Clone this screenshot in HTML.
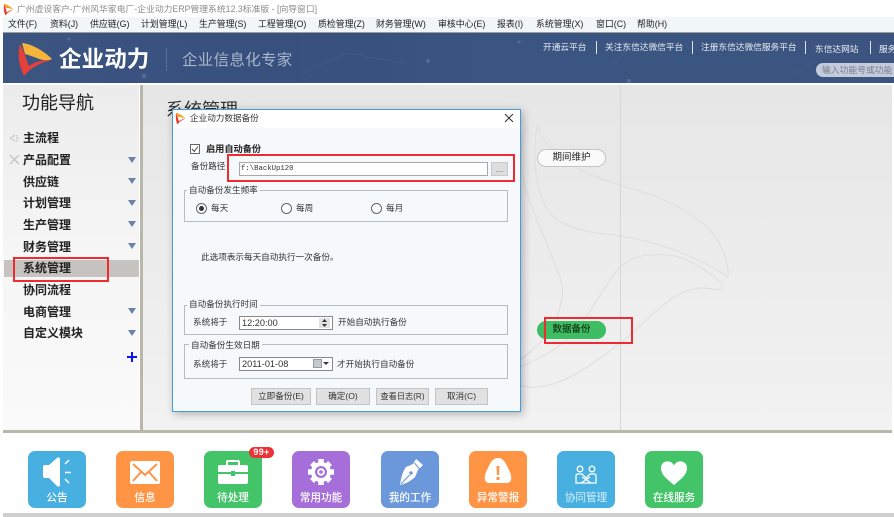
<!DOCTYPE html>
<html lang="zh"><head><meta charset="utf-8"><title>企业动力</title>
<style>
html,body{margin:0;padding:0;background:#fff}
#p{position:relative;width:894px;height:517px;overflow:hidden;background:#fff;font-family:"Liberation Sans","Noto Sans CJK SC",sans-serif;color:#222;filter:blur(.3px)}
#p div{position:absolute;white-space:nowrap}
.m{top:17px;font-size:8.9px;line-height:15px;color:#222}
.l{font-size:8.7px;line-height:14px;color:#e8ecf4;top:40px}
.s{top:41px;width:1px;height:13px;background:#dde3ee}
.n{left:23px;font-size:12px;font-weight:bold;line-height:16px;color:#222}
.t{width:0;height:0;left:128px;border-left:4px solid transparent;border-right:4px solid transparent;border-top:6px solid #6a83a6}
.d{font-size:8.6px;line-height:12px;color:#333}
.g{border:1px solid #b8bcc0;box-sizing:border-box}
.gt{background:#f5f9fc;padding:0 2px;font-size:8.6px;line-height:12px;color:#333}
.b{background:#e1e1e1;border:1px solid #c4c4c4;box-sizing:border-box;font-size:8.6px;line-height:15px;text-align:center;color:#333;top:388px;height:17px}
.r{width:9px;height:9px;border:1px solid #666;border-radius:50%;background:#fff;box-sizing:content-box}
.red{border:2px solid #ee2b30;box-sizing:border-box}
.tile{top:451px;width:58px;height:57px;border-radius:7px}
.tl{left:0;width:58px;text-align:center;top:40px;font-size:10.6px;line-height:14px;color:#fff;font-weight:500}
.tile svg{position:absolute;left:0;top:0}
</style></head><body><div id="p">

<!-- title bar -->
<svg style="position:absolute;left:3px;top:3px" width="11" height="13" viewBox="0 0 11 13"><path d="M1 1C4 1 8 4 10.500 6.500C8 5.500 5 5 3 5Z" fill="#f5a623"/><path d="M1 1C.5 5 1 10 2.500 12.500C4 10 7 8 10.500 6.500C8 7 5 8 4 9.500C3 7 2.500 4 1 1Z" fill="#e8392f"/></svg>
<div style="left:17px;top:2px;font-size:8.8px;line-height:14px;color:#8a8a8a">广州虚设客户-广州风华家电厂-企业动力ERP管理系统12.3标准版 - [向导窗口]</div>

<!-- menu -->
<div style="left:3px;top:17px;width:891px;height:15px;background:#f0f7f6"></div>
<div class="m" style="left:8px">文件(F)</div>
<div class="m" style="left:50px">资料(J)</div>
<div class="m" style="left:90px">供应链(G)</div>
<div class="m" style="left:141px">计划管理(L)</div>
<div class="m" style="left:199px">生产管理(S)</div>
<div class="m" style="left:258px">工程管理(O)</div>
<div class="m" style="left:318px">质检管理(Z)</div>
<div class="m" style="left:376px">财务管理(W)</div>
<div class="m" style="left:438px">审核中心(E)</div>
<div class="m" style="left:497px">报表(I)</div>
<div class="m" style="left:536px">系统管理(X)</div>
<div class="m" style="left:596px">窗口(C)</div>
<div class="m" style="left:637px">帮助(H)</div>
<div style="left:3px;top:32px;width:891px;height:1px;background:#9c9c98"></div>

<!-- banner -->
<div style="left:3px;top:33px;width:891px;height:50px;background:linear-gradient(90deg,#3c5480 0%,#37507e 30%,#3a5582 55%,#3c5580 100%)"></div>
<svg style="position:absolute;left:3px;top:33px" width="891" height="50" viewBox="0 0 891 50">
<g stroke="#6b85ad" stroke-width=".6" opacity=".25" fill="none"><path d="M300 40L345 20L400 30"/><path d="M610 32L630 10"/><path d="M790 40L810 30"/></g>
<g fill="#7f98c8" opacity=".35"><circle cx="141" cy="43" r="2.500"/><circle cx="425" cy="28" r="2"/><circle cx="66" cy="6" r="1.500"/><circle cx="516" cy="9" r="1.500"/><circle cx="626" cy="48" r="2"/></g>
<path d="M19 10C29 11 41 18 49 26C42 30 36 25 22 21Z" fill="#f5b53c"/>
<path d="M17 11C14 22 16 33 21 43C27 35 37 30 48 27C38 27 31 29 26 33C23 26 21 18 17 11Z" fill="#e5403a"/>
</svg>
<div style="left:59px;top:46px;font-size:22.5px;line-height:28px;font-weight:bold;color:#fff;letter-spacing:.1px">企业动力</div>
<div style="left:166px;top:48px;width:1px;height:23px;background:#56709a"></div>
<div style="left:182px;top:51px;font-size:15.5px;line-height:20px;color:#a9b6cc;letter-spacing:.3px">企业信息化专家</div>

<div class="l" style="left:543px">开通云平台</div>
<div class="s" style="left:596px"></div>
<div class="l" style="left:605px">关注东信达微信平台</div>
<div class="s" style="left:692px"></div>
<div class="l" style="left:701px">注册东信达微信服务平台</div>
<div class="s" style="left:805px"></div>
<div class="l" style="left:815px;top:42px">东信达网站</div>
<div class="s" style="left:870px"></div>
<div class="l" style="left:879px;top:42px">服务</div>
<div style="left:816px;top:63px;width:90px;height:14px;border-radius:7px;background:#c3cbdc"></div>
<div style="left:822px;top:63px;font-size:8.8px;line-height:14px;color:#78808e">输入功能号或功能</div>

<!-- main region -->
<div style="left:3px;top:85px;width:136px;height:345px;background:linear-gradient(180deg,#ececec 0%,#f6f6f6 50%,#fafafa 100%)"></div>
<div style="left:139px;top:85px;width:1px;height:345px;background:#fff"></div>
<div style="left:140px;top:85px;width:3px;height:345px;background:#b9b7aa"></div>
<div style="left:143px;top:85px;width:749px;height:345px;background:linear-gradient(180deg,#e6e6e6 0%,#f2f2f2 100%)"></div>
<div style="left:3px;top:430px;width:889px;height:3px;background:#b9b7aa"></div>

<!-- watermark -->
<svg style="position:absolute;left:0;top:0" width="894" height="517" viewBox="0 0 894 517" fill="none" stroke="#dedede" stroke-width="1">
<path d="M537 126C530 170 540 215 563 223C580 232 600 233 620 236C660 242 700 258 728 277C729 262 722 243 707 227C690 212 675 205 660 198C645 192 635 190 620 185C605 180 595 177 587 173C573 166 562 160 553 150C546 142 540 135 537 126Z"/>
<path d="M527 127C520 145 520 160 523 177C530 210 545 235 553 260C562 280 564 290 562 297C560 310 556 322 550 330C540 345 530 352 520 360"/>
<path d="M520 367C540 358 556 350 570 337C590 315 605 285 617 270C630 258 640 255 653 255C668 254 678 256 687 260C700 266 712 275 722 283L722 290C715 289 708 288 700 288C690 289 680 293 670 300C655 310 640 328 620 343C605 355 588 368 570 377C558 383 548 386 537 387C530 388 525 387 520 385"/>
</svg>
<div style="left:620px;top:85px;width:1px;height:345px;background:#d6d6d6"></div>

<!-- sidebar -->
<div style="left:22px;top:91px;font-size:18px;line-height:24px;color:#222">功能导航</div>
<svg style="position:absolute;left:9px;top:132px" width="11" height="12" viewBox="0 0 11 12" fill="#d2d2d2"><path d="M0 6L6 2V4L3 6L6 8V10ZM7 3h2v1.500H7ZM7 5.500h3V7H7ZM7 8h2v1.500H7Z"/></svg>
<svg style="position:absolute;left:9px;top:154px" width="11" height="11" viewBox="0 0 11 11" stroke="#c4c4c4" stroke-width="1.300" fill="none"><path d="M1 1L10 10M10 1L1 10"/></svg>
<div class="n" style="top:130px">主流程</div>
<div class="n" style="top:152px">产品配置</div>
<div class="n" style="top:174px">供应链</div>
<div class="n" style="top:195px">计划管理</div>
<div class="n" style="top:217px">生产管理</div>
<div class="n" style="top:239px">财务管理</div>
<div style="left:4px;top:260px;width:135px;height:17px;background:#c6c3c1"></div>
<div class="n" style="top:260px">系统管理</div>
<div class="n" style="top:282px">协同流程</div>
<div class="n" style="top:304px">电商管理</div>
<div class="n" style="top:325px">自定义模块</div>
<div class="t" style="top:157px"></div>
<div class="t" style="top:178px"></div>
<div class="t" style="top:200px"></div>
<div class="t" style="top:221px"></div>
<div class="t" style="top:243px"></div>
<div class="t" style="top:308px"></div>
<div class="t" style="top:330px"></div>
<div style="left:127px;top:356px;width:10px;height:2px;background:#0a14ee"></div>
<div style="left:131px;top:352px;width:2px;height:10px;background:#0a14ee"></div>
<div class="red" style="left:13px;top:257px;width:96px;height:25px"></div>

<div style="left:166px;top:98px;font-size:18px;line-height:24px;color:#333">系统管理</div>

<!-- right buttons -->
<div style="left:537px;top:149px;width:69px;height:18px;border:1px solid #c4c4c4;border-radius:9px;background:#fafafa;box-sizing:border-box;text-align:center;font-size:9.5px;line-height:16px;color:#222">期间维护</div>
<div style="left:537px;top:321px;width:69px;height:18px;border-radius:9px;background:#3fbd63;text-align:center;font-size:9.5px;line-height:18px;color:#10300f;font-weight:500">数据备份</div>
<div class="red" style="left:544px;top:317px;width:89px;height:27px"></div>

<!-- dialog -->
<div style="left:172px;top:109px;width:349px;height:303px;box-sizing:border-box;border:1px solid #4b9ad8;background:#f5f9fc;box-shadow:2px 2px 8px rgba(0,0,0,.28)"></div>
<div style="left:173px;top:110px;width:347px;height:18px;background:#fff"></div>
<svg style="position:absolute;left:175px;top:112px" width="11" height="13" viewBox="0 0 11 13"><path d="M1 1C4 1 8 4 10.500 6.500C8 5.500 5 5 3 5Z" fill="#f5a623"/><path d="M1 1C.5 5 1 10 2.500 12.500C4 10 7 8 10.500 6.500C8 7 5 8 4 9.500C3 7 2.500 4 1 1Z" fill="#e8392f"/></svg>
<div style="left:190px;top:111px;font-size:8.6px;line-height:14px;color:#333">企业动力数据备份</div>
<svg style="position:absolute;left:504px;top:113px" width="10" height="10" viewBox="0 0 10 10" stroke="#333" stroke-width="1" fill="none"><path d="M1 1L9 9M9 1L1 9"/></svg>

<svg style="position:absolute;left:190px;top:144px" width="10" height="10" viewBox="0 0 10 10" fill="none"><rect x=".5" y=".5" width="9" height="9" fill="#fff" stroke="#666"/><path d="M2 5L4.300 7.500L8 2.500" stroke="#444" stroke-width="1"/></svg>
<div style="left:206px;top:143px;font-size:9.2px;line-height:12px;font-weight:bold;color:#222">启用自动备份</div>
<div class="d" style="left:191px;top:160px">备份路径</div>
<div style="left:239px;top:162px;width:249px;height:14px;background:#fff;border:1px solid #a8a8a8;box-sizing:border-box;font-family:'Liberation Mono','Noto Sans CJK SC',monospace;font-size:7.3px;line-height:12px;padding-left:1px;color:#333">f:\BackUp120</div>
<div style="left:491px;top:162px;width:17px;height:14px;background:#dedede;border:1px solid #c8c8c8;box-sizing:border-box;font-size:9px;line-height:13px;text-align:center;color:#777">...</div>
<div class="red" style="left:227px;top:154px;width:288px;height:28px"></div>

<div class="g" style="left:184px;top:190px;width:324px;height:32px"></div>
<div class="gt" style="left:187px;top:184px">自动备份发生频率</div>
<div class="r" style="left:196px;top:203px"></div>
<div style="left:199px;top:206px;width:5px;height:5px;border-radius:50%;background:#333"></div>
<div class="d" style="left:211px;top:202px">每天</div>
<div class="r" style="left:281px;top:203px"></div>
<div class="d" style="left:296px;top:202px">每周</div>
<div class="r" style="left:371px;top:203px"></div>
<div class="d" style="left:386px;top:202px">每月</div>

<div class="d" style="left:201px;top:251px">此选项表示每天自动执行一次备份。</div>

<div class="g" style="left:184px;top:305px;width:324px;height:30px"></div>
<div class="gt" style="left:187px;top:298px">自动备份执行时间</div>
<div class="d" style="left:193px;top:316px">系统将于</div>
<div style="left:239px;top:316px;width:94px;height:14px;background:#fff;border:1px solid #888;box-sizing:border-box;font-size:9.2px;line-height:13px;padding-left:2px;color:#333">12:20:00</div>
<div style="left:319px;top:318px;width:11px;height:10px;background:#e2e2e2"></div>
<svg style="position:absolute;left:322px;top:319px" width="5" height="8" viewBox="0 0 5 8" fill="#333"><path d="M2.500 0L5 3H0ZM0 5H5L2.500 8Z"/></svg>
<div class="d" style="left:338px;top:316px">开始自动执行备份</div>

<div class="g" style="left:184px;top:344px;width:324px;height:35px"></div>
<div class="gt" style="left:189px;top:339px">自动备份生效日期</div>
<div class="d" style="left:193px;top:358px">系统将于</div>
<div style="left:239px;top:357px;width:94px;height:14px;background:#fff;border:1px solid #888;box-sizing:border-box;font-size:9.2px;line-height:13px;padding-left:2px;color:#333">2011-01-08</div>
<div style="left:313px;top:359px;width:9px;height:9px;background:#c4cad2;border:1px solid #999;box-sizing:border-box"></div>
<div style="left:323px;top:362px;width:0;height:0;border-left:3px solid transparent;border-right:3px solid transparent;border-top:3px solid #335"></div>
<div class="d" style="left:337px;top:358px">才开始执行自动备份</div>

<div class="b" style="left:251px;width:60px">立即备份(E)</div>
<div class="b" style="left:316px;width:54px">确定(O)</div>
<div class="b" style="left:376px;width:53px;font-size:8.2px">查看日志(R)</div>
<div class="b" style="left:435px;width:53px">取消(C)</div>

<!-- bottom tiles -->
<div class="tile" style="left:28px;background:#47b0e0"><svg width="58" height="57" viewBox="0 0 58 57"><path d="M17 14Q15 14 15 16V25Q15 27 17 27H21L29 35Q32 37 32 33V9Q32 5 29 7L21 14Z" fill="#fff"/><path d="M37 13L41 9M37 21.500H43M37 28L41 32" stroke="#fff" stroke-width="1.500" fill="none"/></svg><div class="tl">公告</div></div>
<div class="tile" style="left:116px;background:#ff9445"><svg width="58" height="57" viewBox="0 0 58 57"><rect x="14" y="10" width="30" height="23" rx="2" fill="#fff"/><path d="M17 13L29 24L41 13M17 30L25 21M41 30L33 21" stroke="#ff9445" stroke-width="2" fill="none"/></svg><div class="tl">信息</div></div>
<div class="tile" style="left:204px;background:#43c468"><svg width="58" height="57" viewBox="0 0 58 57"><path d="M23 14V11Q23 10 24 10H34Q35 10 35 11V14" stroke="#fff" stroke-width="2" fill="none"/><path d="M16 14H42Q44 14 44 16V21H31V20H27V21H14V16Q14 14 16 14ZM14 23H27V25H31V23H44V31Q44 33 42 33H16Q14 33 14 31Z" fill="#fff"/></svg><div class="tl">待处理</div></div>
<div style="left:249px;top:447px;width:25px;height:11px;border-radius:6px;background:#ea3237;color:#fff;font-size:9px;line-height:11px;font-weight:bold;text-align:center;letter-spacing:.3px">99+</div>
<div class="tile" style="left:292px;background:#a56ed8"><svg width="58" height="57" viewBox="0 0 58 57"><circle cx="29" cy="21" r="10" fill="#fff"/><g stroke="#fff" stroke-width="5.500"><path d="M29 8V34M16 21H42M20 12L38 30M38 12L20 30"/></g><circle cx="29" cy="21" r="6" fill="#a56ed8"/><circle cx="29" cy="21" r="3.800" fill="#fff"/><circle cx="29" cy="21" r="1.800" fill="#a56ed8"/></svg><div class="tl">常用功能</div></div>
<div class="tile" style="left:381px;background:#6b98da"><svg width="58" height="57" viewBox="0 0 58 57"><path d="M19 34C20 26 22 20 25 16L32 13L35 8L42 14L37 19L34 26C30 30 24 33 19 34Z" fill="#fff"/><path d="M20 33L28.500 24M33.500 12L38.500 18" stroke="#6b98da" stroke-width="1.100" fill="none"/><circle cx="30" cy="22" r="1.800" fill="#6b98da"/></svg><div class="tl">我的工作</div></div>
<div class="tile" style="left:469px;background:#ff9445"><svg width="58" height="57" viewBox="0 0 58 57"><path d="M29 7C35 7 37 13 40 19C43 25 44 32 37 32H21C14 32 15 25 18 19C21 13 23 7 29 7Z" fill="#fff"/><path d="M27.500 15H30.500L30 24H28Z" fill="#ff9445"/><rect x="27.500" y="26" width="3" height="3" fill="#ff9445"/></svg><div class="tl">异常警报</div></div>
<div class="tile" style="left:557px;background:#47b0e0"><svg width="58" height="57" viewBox="0 0 58 57" fill="none" stroke="#fff" stroke-width="1.300"><circle cx="23" cy="18" r="2.800"/><circle cx="35" cy="18" r="2.800"/><path d="M19 32V25Q19 23 21 23H25L29 27L33 23H37Q39 23 39 25V32H19ZM24 32L33 26M34 32L25 26"/></svg><div class="tl" style="font-weight:normal;color:#d8eefa">协同管理</div></div>
<div class="tile" style="left:645px;background:#43c468"><svg width="58" height="57" viewBox="0 0 58 57"><path d="M29 34C22 28 16 24 16 17C16 12 20 10 24 10.500C26.500 11 28 12.500 29 14.500C30 12.500 31.500 11 34 10.500C38 10 42 12 42 17C42 24 36 28 29 34Z" fill="#fff"/></svg><div class="tl">在线服务</div></div>

<div style="left:3px;top:513px;width:891px;height:4px;background:#cfcfcf"></div>
</div></body></html>
